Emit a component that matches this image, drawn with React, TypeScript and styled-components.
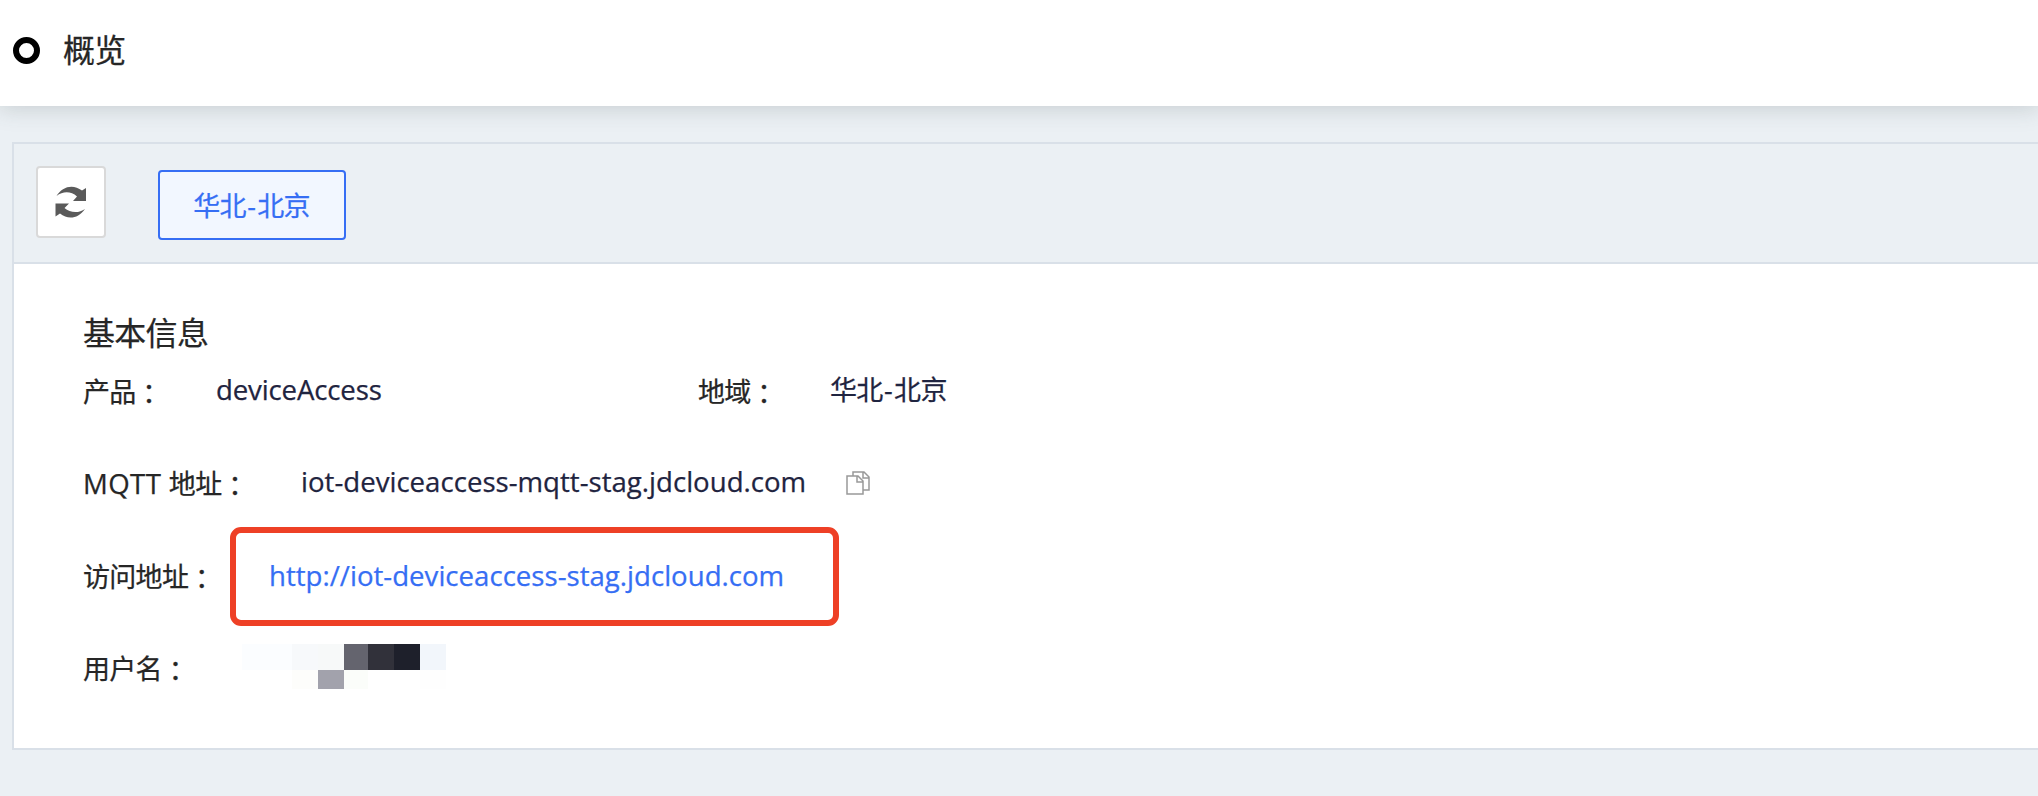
import React from "react";
import styled, { createGlobalStyle } from "styled-components";

const Global = createGlobalStyle`
  * { box-sizing: border-box; }
  body {
    margin: 0;
    background: #ebf0f4;
    color: #262626;
    font-family: "Open Sans", "Noto Sans CJK SC", sans-serif;
    font-size: 27px;
    letter-spacing: -0.7px;
    -webkit-text-stroke: 0.25px currentColor;
    overflow: hidden;
  }
`;

const Page = styled.div`
  height: 796px;
  overflow: hidden;
`;

const Header = styled.header`
  display: flex;
  align-items: center;
  gap: 23px;
  height: 106px;
  padding: 0 0 5px 13px;
  background: #fff;
  box-shadow: 0 0 22px 2px rgba(70, 80, 80, 0.22);
`;

const Ring = styled.span`
  width: 27px;
  height: 27px;
  border: 6px solid #000;
  border-radius: 50%;
`;

const Title = styled.h1`
  margin: 0;
  padding-bottom: 1px;
  font-size: 32px;
  line-height: 40px;
  font-weight: 400;
`;

const Panel = styled.main`
  margin: 36px 0 0 12px;
  height: 608px;
  border: 2px solid #d9e0e8;
  border-right: 0;
  background: #fff;
`;

const Toolbar = styled.div`
  display: flex;
  align-items: flex-start;
  gap: 52px;
  height: 120px;
  padding: 22px;
  background: #ebf0f4;
  border-bottom: 2px solid #d9e0e8;
`;

const RefreshButton = styled.button`
  display: grid;
  place-items: center;
  width: 70px;
  height: 72px;
  padding: 0;
  border: 2px solid #d9d9d9;
  border-radius: 4px;
  background: #fff;
`;

const RegionButton = styled.button`
  width: 188px;
  height: 70px;
  margin-top: 4px;
  padding: 0 1px 1px 0;
  border: 2px solid #366ef4;
  border-radius: 4px;
  background: #f2f7ff;
  color: #366ef4;
  font: inherit;
  letter-spacing: inherit;
`;

const Dash = styled.span`
  padding: 0 2px 0 1.5px;
`;

const Details = styled.section`
  padding: 48px 0 0 69px;
`;

const SectionTitle = styled.h2`
  margin: 0;
  font-size: 32px;
  line-height: 42px;
  font-weight: 400;
`;

const Row = styled.div<{ $height: number }>`
  display: flex;
  align-items: center;
  height: ${(p) => p.$height}px;
`;

const Label = styled.span<{ $width: number }>`
  width: ${(p) => p.$width}px;
  white-space: nowrap;
  line-height: 36px;
`;

const Latin = styled.span<{ $spacing?: number }>`
  font-size: 27.6px;
  letter-spacing: ${(p) => p.$spacing ?? 0}px;
`;

const Colon = styled.span`
  font-family: "Noto Sans CJK TC", sans-serif;
  line-height: 0;
  vertical-align: -2px;
`;

const Value = styled.span<{ $width?: number }>`
  width: ${(p) => (p.$width ? `${p.$width}px` : "auto")};
  line-height: 36px;
  padding-bottom: 4px;
  color: #1f2440;
  white-space: nowrap;
`;

const Highlight = styled.div`
  display: flex;
  align-items: center;
  width: 609px;
  height: 99px;
  padding: 0 0 2px 33px;
  border: 6px solid #ee4026;
  border-radius: 11px;
`;

const Link = styled.a`
  color: #366ef4;
  line-height: 36px;
  text-decoration: none;
  white-space: nowrap;
`;

const Mosaic = styled.div`
  display: grid;
  grid-template-columns: 50px 26px 26px 24px 26px 26px 26px;
  grid-template-rows: 26px 19px;
  margin-bottom: 5px;
`;

const Cell = styled.span<{ $color: string }>`
  background: ${(p) => p.$color};
`;

const cells = [
  "#fbfdff", "#f7f9fb", "#f7f9f9", "#64646e", "#31313a", "#1e202b", "#f2f6fb",
  "#ffffff", "#fdfdfb", "#a2a2ac", "#fbfdfa", "#ffffff", "#ffffff", "#fefefe",
];

const RefreshIcon = () => (
  <svg width="32" height="32" viewBox="0 0 32 32" fill="#5a5a5a">
    <path d="M1.5 10C7 .5 18-2.500 27 4.500L31 2V15H18L22 10.500C16 5 8 5 1.500 10Z" />
    <path d="M.5 17.500H14L9.500 22C15 27 24 27.500 30 23C23 33 13 34 5 27.500L.5 30.500Z" />
  </svg>
);

const CopyIcon = () => (
  <svg width="24" height="24" viewBox="0 0 24 24" fill="none" stroke="#999" strokeWidth="1.5">
    <path d="M7 5V1H18L23 6V19H17M17 1V7H23" />
    <path d="M1 5H12L17 10V23H1ZM11 5V11H17" />
  </svg>
);

const Region = () => (
  <>华北<Dash>-</Dash>北京</>
);

export default function App() {
  return (
    <Page>
      <Global />
      <Header>
        <Ring />
        <Title>概览</Title>
      </Header>
      <Panel>
        <Toolbar>
          <RefreshButton aria-label="刷新"><RefreshIcon /></RefreshButton>
          <RegionButton><Region /></RegionButton>
        </Toolbar>
        <Details>
          <SectionTitle>基本信息</SectionTitle>
          <Row $height={75}>
            <Label $width={133}>产品<Colon>：</Colon></Label>
            <Value $width={482}><Latin $spacing={-0.15}>deviceAccess</Latin></Value>
            <Label $width={132}>地域<Colon>：</Colon></Label>
            <Value><Region /></Value>
          </Row>
          <Row $height={108}>
            <Label $width={218}><Latin $spacing={0.4}>MQTT </Latin>地址<Colon>：</Colon></Label>
            <Value $width={545}><Latin>iot-deviceaccess-mqtt-stag.jdcloud.com</Latin></Value>
            <CopyIcon />
          </Row>
          <Row $height={79}>
            <Label $width={147}>访问地址<Colon>：</Colon></Label>
            <Highlight>
              <Link><Latin>http://iot-deviceaccess-stag.jdcloud.com</Latin></Link>
            </Highlight>
          </Row>
          <Row $height={105}>
            <Label $width={159}>用户名<Colon>：</Colon></Label>
            <Mosaic>{cells.map((c, i) => <Cell key={i} $color={c} />)}</Mosaic>
          </Row>
        </Details>
      </Panel>
    </Page>
  );
}
